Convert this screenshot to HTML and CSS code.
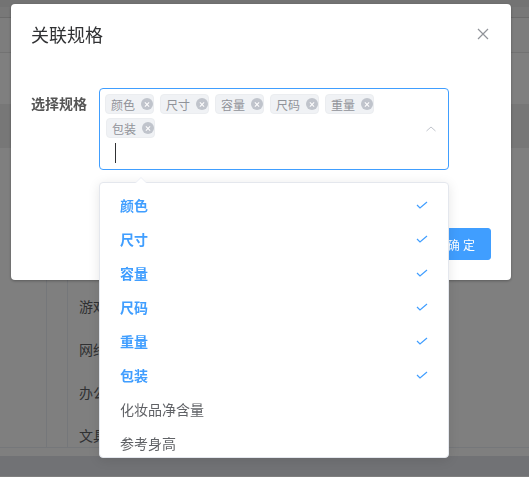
FILE: index.html
```html
<!DOCTYPE html>
<html lang="zh-CN">
<head>
    <meta charset="UTF-8">
    <meta name="viewport" content="width=device-width, initial-scale=1.0">
    <title>关联规格</title>
    <link rel="stylesheet" href="styles.css">
</head>
<body>
    <!-- 背景页面 -->
    <div class="page">
        <div class="topbar"></div>
        <div class="tabs"></div>
        <div class="toolbar"></div>
        <div class="thead"></div>
        <div class="row-gray"></div>
        <div class="tbody">
            <div class="col col-check"></div>
            <div class="col col-index"></div>
            <div class="col col-name">
                <div class="cell">游戏设备</div>
                <div class="cell">网络设备</div>
                <div class="cell">办公设备</div>
                <div class="cell">文具用品</div>
            </div>
        </div>
        <div class="pager"></div>
        <div class="footer"></div>
    </div>

    <div class="mask"></div>

    <div class="dialog-wrapper">
        <div class="dialog">
            <div class="dialog-header">
                <span class="dialog-title">关联规格</span>
                <svg class="dialog-close" width="16" height="16" viewBox="0 0 16 16">
                    <path d="M3 3 L13 13 M13 3 L3 13" stroke="#909399" stroke-width="1.2" fill="none"/>
                </svg>
            </div>

            <div class="dialog-body">
                <div class="form-item">
                    <label class="form-label">选择规格</label>
                    <div class="select-wrap">
                        <div class="select-box">
                            <div class="select-tags">
                                <span class="tag">颜色<i class="tag-close"></i></span>
                                <span class="tag">尺寸<i class="tag-close"></i></span>
                                <span class="tag">容量<i class="tag-close"></i></span>
                                <span class="tag">尺码<i class="tag-close"></i></span>
                                <span class="tag">重量<i class="tag-close"></i></span>
                                <span class="tag">包装<i class="tag-close"></i></span>
                                <div class="select-input"><span class="caret"></span></div>
                            </div>
                            <div class="select-suffix">
                                <svg width="12" height="12" viewBox="0 0 12 12">
                                    <path d="M1.5 8 L6 4 L10.5 8" stroke="#c0c4cc" stroke-width="1" fill="none"/>
                                </svg>
                            </div>
                        </div>

                        <div class="dropdown">
                            <div class="popper-arrow"></div>
                            <ul class="dropdown-list">
                                <li class="option selected">颜色<svg class="check" width="12" height="12" viewBox="0 0 12 12"><path d="M1 6 L4 9 L11 3" stroke="#409eff" stroke-width="1.2" fill="none"/></svg></li>
                                <li class="option selected">尺寸<svg class="check" width="12" height="12" viewBox="0 0 12 12"><path d="M1 6 L4 9 L11 3" stroke="#409eff" stroke-width="1.2" fill="none"/></svg></li>
                                <li class="option selected">容量<svg class="check" width="12" height="12" viewBox="0 0 12 12"><path d="M1 6 L4 9 L11 3" stroke="#409eff" stroke-width="1.2" fill="none"/></svg></li>
                                <li class="option selected">尺码<svg class="check" width="12" height="12" viewBox="0 0 12 12"><path d="M1 6 L4 9 L11 3" stroke="#409eff" stroke-width="1.2" fill="none"/></svg></li>
                                <li class="option selected">重量<svg class="check" width="12" height="12" viewBox="0 0 12 12"><path d="M1 6 L4 9 L11 3" stroke="#409eff" stroke-width="1.2" fill="none"/></svg></li>
                                <li class="option selected">包装<svg class="check" width="12" height="12" viewBox="0 0 12 12"><path d="M1 6 L4 9 L11 3" stroke="#409eff" stroke-width="1.2" fill="none"/></svg></li>
                                <li class="option">化妆品净含量</li>
                                <li class="option">参考身高</li>
                            </ul>
                        </div>
                    </div>
                </div>
            </div>

            <div class="dialog-footer">
                <button class="btn">取 消</button>
                <button class="btn btn-primary">确 定</button>
            </div>
        </div>
    </div>
</body>
</html>
```

FILE: styles.css
```css
* { margin: 0; padding: 0; box-sizing: border-box; }

body {
    font-family: "Helvetica Neue", "Liberation Sans", "Noto Sans CJK SC", sans-serif;
    background: #fff;
    color: #606266;
    overflow: hidden;
    height: 100vh;
}

/* 背景页面 */
.topbar { height: 7px; background: #e6e6e6; }
.tabs { height: 11px; background: #f0f0f0; border-bottom: 1px solid #d6d6d6; }
.toolbar { height: 35px; background: #fafafa; border-bottom: 1px solid #e4e4e4; }
.thead { height: 51px; background: #fff; }
.row-gray { height: 44px; background: #eeeeee; }

.tbody {
    display: flex;
    height: 300px;
    overflow: hidden;
    border-bottom: 1px solid #ebeef5;
}

.col { height: 100%; }
.col-check { width: 47px; border-right: 1px solid #ebeef5; }
.col-index { width: 21px; border-right: 1px solid #ebeef5; }

.col-name {
    width: 31px;
    overflow: hidden;
    white-space: nowrap;
    padding: 138px 0 0 11px;
}

.cell {
    height: 43px;
    line-height: 43px;
    font-size: 14px;
    color: #606266;
}

.pager { height: 8px; background: #fff; }
.footer { height: 20px; background: #e2e4ea; }

/* 遮罩和弹窗 */
.mask {
    position: fixed;
    inset: 0;
    background: rgba(0, 0, 0, .5);
}

.dialog-wrapper {
    position: fixed;
    inset: 0;
    padding: 4px 0 0 11px;
}

.dialog {
    width: 500px;
    background: #fff;
    border-radius: 4px;
    box-shadow: 0 1px 3px rgba(0, 0, 0, .3);
}

.dialog-header {
    display: flex;
    justify-content: space-between;
    align-items: flex-start;
    padding: 20px 20px 10px;
}

.dialog-title {
    font-size: 18px;
    line-height: 24px;
    color: #303133;
}

.dialog-close { margin-top: 2px; }

.dialog-body { padding: 30px 20px; }

.form-item {
    display: flex;
    margin-bottom: 18px;
}

.form-label {
    width: 68px;
    padding-right: 12px;
    text-align: right;
    line-height: 32px;
    font-size: 14px;
    font-weight: bold;
    color: #555;
}

.select-wrap {
    position: relative;
    width: 350px;
}

.select-box {
    display: flex;
    border: 1px solid #409eff;
    border-radius: 4px;
    padding: 3px 0;
    background: #fff;
}

.select-tags {
    flex: 1;
    display: flex;
    flex-wrap: wrap;
    align-content: flex-start;
}

.tag {
    display: inline-flex;
    align-items: center;
    height: 20px;
    margin: 2px 0 2px 6px;
    padding-left: 5px;
    gap: 6px;
    background: #f0f2f5;
    border: 1px solid #ebedf0;
    border-radius: 4px;
    font-size: 12px;
    color: #909399;
}

.tag:first-child { margin-left: 5px; }

.tag-close {
    position: relative;
    width: 12px;
    height: 12px;
    border-radius: 50%;
    background: #c0c4cc;
}

.tag-close::before, .tag-close::after {
    content: "";
    position: absolute;
    left: 3px;
    top: 5.5px;
    width: 6px;
    height: 1px;
    background: #fff;
    transform: rotate(45deg);
}

.tag-close::after { transform: rotate(-45deg); }

.select-input {
    width: 100%;
    height: 26px;
    display: flex;
    align-items: center;
    padding-left: 15px;
}

.caret {
    width: 1px;
    height: 20px;
    background: #303133;
}

.select-suffix {
    width: 25px;
    margin-right: 5px;
    display: flex;
    align-items: center;
    justify-content: center;
}

/* 下拉框 */
.dropdown {
    position: absolute;
    top: 100%;
    left: 0;
    width: 100%;
    margin-top: 12px;
    background: #fff;
    border: 1px solid #e4e7ed;
    border-radius: 4px;
    box-shadow: 0 2px 12px rgba(0, 0, 0, .1);
    z-index: 10;
}

.popper-arrow {
    position: absolute;
    top: -6px;
    left: 35px;
    width: 0;
    height: 0;
    border: 6px solid transparent;
    border-top-width: 0;
    border-bottom-color: #ebeef5;
}

.popper-arrow::after {
    content: "";
    position: absolute;
    top: 1px;
    left: -6px;
    border: 6px solid transparent;
    border-top-width: 0;
    border-bottom-color: #fff;
}

.dropdown-list {
    list-style: none;
    max-height: 274px;
    overflow: hidden;
    padding: 5px 0;
}

.option {
    display: flex;
    align-items: center;
    justify-content: space-between;
    height: 34px;
    padding: 0 20px;
    font-size: 14px;
    color: #606266;
}

.option.selected {
    color: #409eff;
    font-weight: bold;
}

/* 底部按钮 */
.dialog-footer {
    padding: 10px 20px 20px;
    text-align: right;
}

.btn {
    height: 32px;
    padding: 0 15px;
    font-family: inherit;
    font-size: 12px;
    border-radius: 3px;
    border: 1px solid #dcdfe6;
    background: #fff;
    color: #606266;
    margin-left: 10px;
}

.btn-primary {
    background: #409eff;
    border-color: #409eff;
    color: #fff;
}
```
